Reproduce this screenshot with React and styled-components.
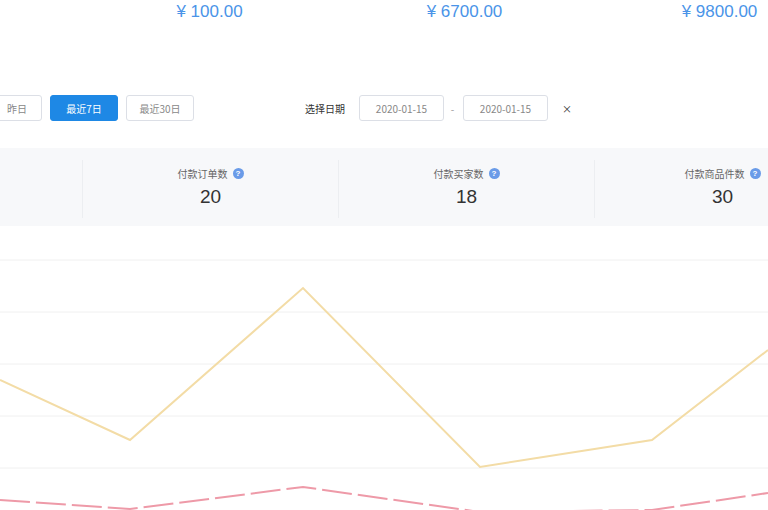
import React from "react";
import styled, { createGlobalStyle } from "styled-components";

const G = createGlobalStyle`
  body{margin:0;background:#fff;font-family:"Noto Sans CJK SC","Noto Sans",sans-serif;overflow:hidden;}
`;
const Page = styled.div`width:768px;height:510px;overflow:hidden;position:relative;`;
const Cols = styled.div`display:flex;margin-left:-173px;`;
const Col = styled.div`width:255px;flex:none;display:flex;flex-direction:column;align-items:center;
  border-left:${p => p.$div ? "1px solid #eceef1" : "none"};`;
const Money = styled.div`font-family:"Liberation Sans",sans-serif;font-size:17px;color:#4a94e8;height:24px;line-height:24px;`;
const Bar = styled.div`display:flex;align-items:center;height:28px;margin-top:70px;margin-left:-8px;`;
const Btn = styled.div`height:26px;box-sizing:border-box;border:1px solid ${p=>p.$on?"#1e88e5":"#dcdfe6"};
  background:${p=>p.$on?"#1e88e5":"#fff"};color:${p=>p.$on?"#fff":"#888"};font-size:10px;border-radius:3px;
  display:flex;align-items:center;justify-content:center;width:${p=>p.$w}px;margin-right:${p=>p.$mr||8}px;`;
const Label = styled.div`font-size:10px;color:#333;margin-right:${p=>p.$mr||10}px;`;
const Sep = styled.div`width:13px;text-align:center;color:#999;font-size:10px;margin-right:4px;margin-left:-6px;`;
const Stats = styled.div`margin-top:26px;height:78px;background:#f7f8fa;`;
const StatCol = styled(Col)`height:58px;margin-top:12px;justify-content:flex-start;`;
const SLabel = styled.div`font-size:10px;color:#666;display:flex;align-items:center;gap:5px;margin-top:6px;`;
const Q = styled.span`width:11px;height:11px;border-radius:50%;background:#6a9be8;color:#fff;font-size:8px;
  display:inline-flex;align-items:center;justify-content:center;font-family:"Liberation Sans",sans-serif;font-weight:bold;`;
const SVal = styled.div`font-family:"Liberation Sans",sans-serif;font-size:19px;color:#333;margin-top:5px;`;

const stats=[["",""],["付款订单数","20"],["付款买家数","18"],["付款商品件数","30"]];
export default function App(){
  return <Page><G/>
    <Cols>{["¥ 0.00","¥ 100.00","¥ 6700.00","¥ 9800.00"].map((m,i)=><Col key={i}><Money>{m}</Money></Col>)}</Cols>
    <Bar>
      <Btn $w={50}>昨日</Btn>
      <Btn $w={68} $on>最近7日</Btn>
      <Btn $w={68} $mr={111}>最近30日</Btn>
      <Label $mr={14}>选择日期</Label>
      <Btn $w={85}>2020-01-15</Btn>
      <Sep>-</Sep>
      <Btn $w={85} $mr={14}>2020-01-15</Btn>
      <Label>×</Label>
    </Bar>
    <Stats><Cols>{stats.map((s,i)=><StatCol key={i} $div={i>0}>{s[0]&&<><SLabel>{s[0]}<Q>?</Q></SLabel><SVal>{s[1]}</SVal></>}</StatCol>)}</Cols></Stats>
    <svg width="768" height="284" viewBox="0 226 768 284" style={{display:"block"}}>
      {[260,312,364,416,468].map(y=><line key={y} x1="0" x2="768" y1={y} y2={y} stroke="#f0f0f0"/>)}
      <polyline fill="none" stroke="#f3dca6" strokeWidth="2" points="0,380 130,440 303,288 480,467 652,440 768,350"/>
      <polyline fill="none" stroke="#ee9aa8" strokeWidth="2" strokeDasharray="30 6" points="0,500 130,509 303,487 480,512 652,510 768,493"/>
    </svg>
  </Page>;
}
